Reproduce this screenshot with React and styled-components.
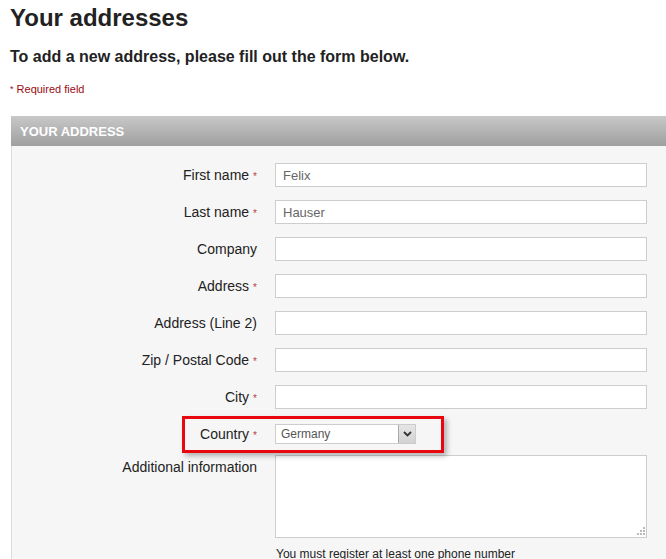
import React from "react";
import styled, { createGlobalStyle } from "styled-components";

const GlobalStyle = createGlobalStyle`
  html, body {
    margin: 0;
    padding: 0;
    background: #fff;
    overflow: hidden;
  }
  body {
    font-family: "Liberation Sans", Arial, sans-serif;
    color: #222;
  }
`;

const fields = [
  { label: "First name", value: "Felix", required: true },
  { label: "Last name", value: "Hauser", required: true },
  { label: "Company", value: "" },
  { label: "Address", value: "", required: true },
  { label: "Address (Line 2)", value: "" },
  { label: "Zip / Postal Code", value: "", required: true },
  { label: "City", value: "", required: true },
];

const App = () => {
  return (
    <Page>
      <GlobalStyle />
      <Title>Your addresses</Title>
      <Intro>To add a new address, please fill out the form below.</Intro>
      <RequiredNote>
        <Star>*</Star> Required field
      </RequiredNote>

      <Panel>
        <PanelHeader>Your address</PanelHeader>
        <PanelBody>
          {fields.map((f) => (
            <Row key={f.label}>
              <Label>
                {f.label}
                {f.required && <LabelStar>*</LabelStar>}
              </Label>
              <Input readOnly value={f.value} />
            </Row>
          ))}

          <Row $h="20px">
            <Highlight />
            <Label>
              Country
              <LabelStar>*</LabelStar>
            </Label>
            <Select>
              <SelectValue>Germany</SelectValue>
              <SelectButton>
                <svg width="9" height="6" viewBox="0 0 9 6">
                  <path
                    d="M1 1 L4.5 4.5 L8 1"
                    fill="none"
                    stroke="#333"
                    strokeWidth="1.8"
                  />
                </svg>
              </SelectButton>
            </Select>
          </Row>

          <Row $h="auto" $top>
            <Label>Additional information</Label>
            <AreaWrap>
              <TextArea readOnly />
              <Grip width="9" height="9" viewBox="0 0 9 9">
                <rect x="7" y="1" width="2" height="2" fill="#bbb" />
                <rect x="4" y="4" width="2" height="2" fill="#bbb" />
                <rect x="7" y="4" width="2" height="2" fill="#bbb" />
                <rect x="1" y="7" width="2" height="2" fill="#bbb" />
                <rect x="4" y="7" width="2" height="2" fill="#bbb" />
                <rect x="7" y="7" width="2" height="2" fill="#bbb" />
              </Grip>
              <Hint>You must register at least one phone number</Hint>
            </AreaWrap>
          </Row>
        </PanelBody>
      </Panel>
    </Page>
  );
};

export default App;

const Page = styled.div`
  padding: 4px 0 0 10px;
`;

const Title = styled.h1`
  margin: 0;
  font-size: 24px;
  line-height: 28px;
  font-weight: 700;
  color: #222;
`;

const Intro = styled.h2`
  margin: 15px 0 0;
  font-size: 16px;
  line-height: 20px;
  font-weight: 700;
  color: #222;
`;

const RequiredNote = styled.p`
  margin: 15px 0 0;
  font-size: 11px;
  line-height: 14px;
  color: #9b0a10;
`;

const Star = styled.span`
  font-size: 9px;
  vertical-align: 1px;
`;

const Panel = styled.div`
  margin: 20px 0 0 1px;
  width: 700px;
`;

const PanelHeader = styled.div`
  height: 30px;
  box-sizing: border-box;
  padding: 2px 0 0 9px;
  line-height: 28px;
  font-size: 13px;
  font-weight: 700;
  color: #fff;
  text-transform: uppercase;
  background: linear-gradient(#c8c8c8, #9f9f9f);
`;

const PanelBody = styled.div`
  background: #f6f6f6;
  border-left: 1px solid #dcdcdc;
  padding: 17px 0 0;
  display: flex;
  flex-direction: column;
  gap: 13px;
`;

const Row = styled.div`
  position: relative;
  display: grid;
  grid-template-columns: 245px 372px;
  column-gap: 18px;
  align-items: ${(p) => (p.$top ? "start" : "center")};
  height: ${(p) => p.$h || "24px"};
`;

const Label = styled.label`
  position: relative;
  z-index: 1;
  text-align: right;
  font-size: 14px;
  line-height: 24px;
  height: 24px;
  color: #222;
  white-space: nowrap;
`;

const LabelStar = styled.span`
  margin-left: 4px;
  font-size: 10px;
  line-height: 10px;
  color: #b5424a;
`;

const Input = styled.input`
  box-sizing: border-box;
  width: 372px;
  height: 24px;
  margin: 0;
  padding: 0 7px;
  border: 1px solid #cdcdcd;
  background: #fff;
  font-family: "Liberation Sans", Arial, sans-serif;
  font-size: 13px;
  color: #666;
  outline: none;
`;

const Select = styled.div`
  box-sizing: border-box;
  width: 141px;
  height: 20px;
  display: flex;
  align-items: stretch;
  border: 1px solid #cdcdcd;
  background: #fff;
`;

const SelectValue = styled.span`
  flex: 1;
  padding-left: 5px;
  font-size: 12px;
  line-height: 18px;
  color: #555;
`;

const SelectButton = styled.span`
  width: 16px;
  display: flex;
  align-items: center;
  justify-content: center;
  background: linear-gradient(#e6e6e6, #d2d2d2);
  border-left: 1px solid #a9a9a9;
`;

const Highlight = styled.div`
  position: absolute;
  left: 170px;
  top: -6px;
  width: 262px;
  height: 37px;
  box-sizing: border-box;
  border: 3px solid #e8070e;
  box-shadow: 3px 3px 5px rgba(0, 0, 0, 0.28);
  pointer-events: none;
  z-index: 2;
`;

const AreaWrap = styled.div`
  position: relative;
  width: 372px;
`;

const TextArea = styled.textarea`
  display: block;
  box-sizing: border-box;
  width: 372px;
  height: 83px;
  margin: 0;
  border: 1px solid #cdcdcd;
  background: #fff;
  resize: none;
  outline: none;
`;

const Grip = styled.svg`
  position: absolute;
  right: 2px;
  top: 71px;
`;

const Hint = styled.p`
  margin: 8px 0 0 1px;
  font-size: 12px;
  line-height: 16px;
  color: #222;
`;
